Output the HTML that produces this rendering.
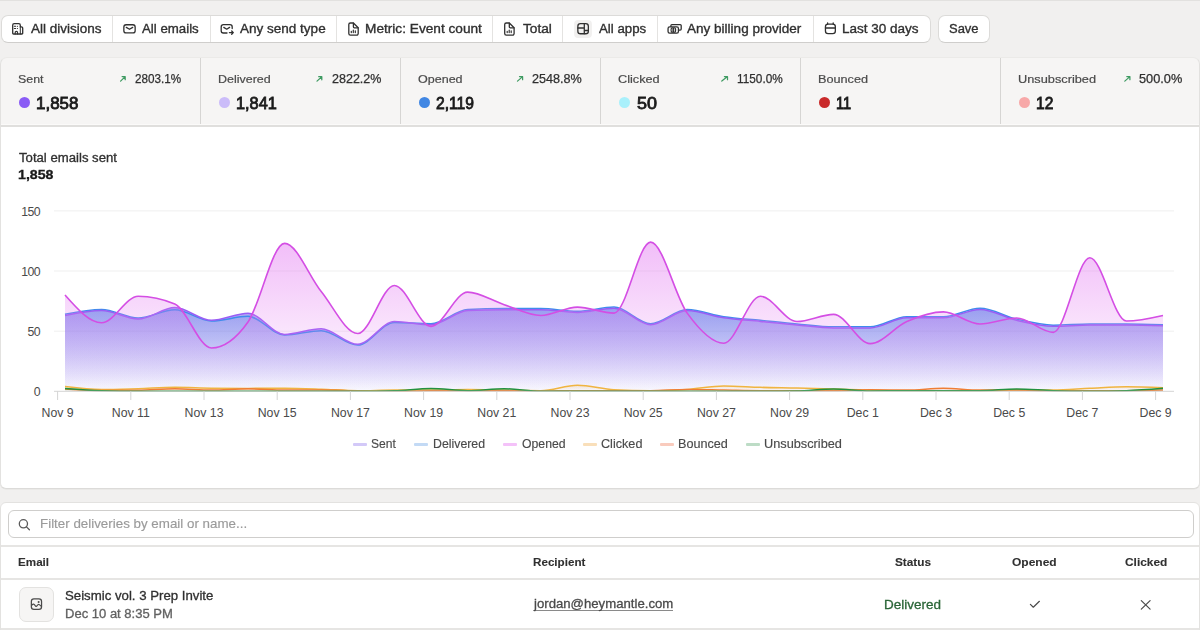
<!DOCTYPE html>
<html><head><meta charset="utf-8">
<style>
*{box-sizing:border-box;margin:0;padding:0}
html,body{width:1200px;height:630px;overflow:hidden;background:#f1f0ef;font-family:"Liberation Sans",sans-serif;color:#303030}
body{position:relative}
.topline{position:absolute;left:0;top:0;width:1200px;height:1px;background:#e2e1df}
.group{position:absolute;left:1px;top:15px;width:930px;height:28px;background:#fff;border:1px solid #dcdbd9;border-bottom-color:#cfcecc;border-radius:7px}
.dv{position:absolute;top:16px;width:1px;height:26px;background:#e4e3e1}
.t{position:absolute;white-space:nowrap;font-size:13px;line-height:16px;color:#303030}
.save{position:absolute;left:938px;top:15px;width:52px;height:28px;background:#fff;border:1px solid #dcdbd9;border-bottom-color:#cfcecc;border-radius:7px}
.stats{position:absolute;left:0;top:57px;width:1200px;height:70px;background:#f6f5f4;border:1px solid #e2e1df;border-top-color:#ebeae8;border-bottom:none;border-radius:7px 7px 0 0}
.sbot{position:absolute;left:1px;top:125px;width:1198px;height:2px;background:#e0dfdd;box-shadow:0 -1px 0 #fbfaf9}
.sdv{position:absolute;top:58px;width:1px;height:67px;background:#d6d5d3}
.lab{position:absolute;white-space:nowrap;font-size:12px;line-height:14px;color:#4a4a4a}
.pct{position:absolute;white-space:nowrap;font-size:12px;line-height:14px;color:#303030}
.num{position:absolute;white-space:nowrap;font-size:17px;line-height:20px;font-weight:bold;color:#1a1a1a}
.dot{position:absolute;width:11px;height:11px;border-radius:50%}
.card{position:absolute;left:0;top:127px;width:1200px;height:362px;background:#fff;border:1px solid #e3e2e0;border-top:none;border-bottom-color:#dcdbd9;border-radius:0 0 6px 6px;box-shadow:0 0.5px 0 #e3e2e0}
.chart{position:absolute;left:0;top:0}
.tcard{position:absolute;left:0;top:502px;width:1200px;height:140px;background:#fff;border:1px solid #e3e2e0;border-radius:6px 6px 0 0}
.search{position:absolute;left:8px;top:510px;width:1186px;height:28px;border:1px solid #cfcecc;border-radius:6px;background:#fff}
.ph{position:absolute;white-space:nowrap;font-size:13px;line-height:16px;color:#8d8d8d}
.hline{position:absolute;left:1px;width:1198px;height:2px;background:#e6e5e3}
.th{position:absolute;white-space:nowrap;font-size:12px;line-height:14px;font-weight:bold;color:#303030}
.td{position:absolute;white-space:nowrap;font-size:13px;line-height:16px;color:#303030}
.leg{position:absolute;white-space:nowrap;font-size:12px;line-height:14px;color:#4a4a4a}
.li{position:absolute;width:14px;height:3px;border-radius:1px}
svg.ic{position:absolute;overflow:visible}
.tx{position:absolute;white-space:nowrap;font-family:"Liberation Sans",sans-serif;transform-origin:0 0}
</style></head><body>
<div class="topline"></div>
<div class="group"></div>
<div class="dv" style="left:112px"></div>
<div class="dv" style="left:210px"></div>
<div class="dv" style="left:336px"></div>
<div class="dv" style="left:492px"></div>
<div class="dv" style="left:562px"></div>
<div class="dv" style="left:657px"></div>
<div class="dv" style="left:813px"></div>
<div class="save"></div>

<div class="stats"></div>
<div class="sdv" style="left:200px"></div>
<div class="sdv" style="left:400px"></div>
<div class="sdv" style="left:600px"></div>
<div class="sdv" style="left:800px"></div>
<div class="sdv" style="left:1000px"></div>
<div class="sbot"></div>



<div class="dot" style="left:18.7px;top:97.2px;background:#8a5cf5"></div>
<div class="dot" style="left:218.8px;top:97.2px;background:#cbbcf9"></div>
<div class="dot" style="left:418.8px;top:97.2px;background:#4187e3"></div>
<div class="dot" style="left:618.8px;top:97.2px;background:#a9f0fb"></div>
<div class="dot" style="left:818.8px;top:97.2px;background:#c92a2a"></div>
<div class="dot" style="left:1018.8px;top:97.2px;background:#f7a8a8"></div>


<div class="card"></div>
<svg class="chart" width="1200" height="630" viewBox="0 0 1200 630">
<defs><linearGradient id="gs" x1="0" y1="307.6" x2="0" y2="391.3" gradientUnits="userSpaceOnUse"><stop offset="0" stop-color="#7a68ea" stop-opacity="0.62"/><stop offset="1" stop-color="#7a68ea" stop-opacity="0.04"/></linearGradient><linearGradient id="gd" x1="0" y1="307.1" x2="0" y2="391.3" gradientUnits="userSpaceOnUse"><stop offset="0" stop-color="#4a8fe6" stop-opacity="0.2"/><stop offset="1" stop-color="#4a8fe6" stop-opacity="0.0"/></linearGradient><linearGradient id="go" x1="0" y1="242.2" x2="0" y2="391.3" gradientUnits="userSpaceOnUse"><stop offset="0" stop-color="#e47cf2" stop-opacity="0.5"/><stop offset="1" stop-color="#e47cf2" stop-opacity="0.0"/></linearGradient><linearGradient id="gc" x1="0" y1="385.3" x2="0" y2="391.3" gradientUnits="userSpaceOnUse"><stop offset="0" stop-color="#f0b441" stop-opacity="0.2"/><stop offset="1" stop-color="#f0b441" stop-opacity="0.0"/></linearGradient><linearGradient id="gb" x1="0" y1="388.3" x2="0" y2="391.3" gradientUnits="userSpaceOnUse"><stop offset="0" stop-color="#ef7d35" stop-opacity="0.2"/><stop offset="1" stop-color="#ef7d35" stop-opacity="0.0"/></linearGradient><linearGradient id="gu" x1="0" y1="388.3" x2="0" y2="391.3" gradientUnits="userSpaceOnUse"><stop offset="0" stop-color="#23913f" stop-opacity="0.2"/><stop offset="1" stop-color="#23913f" stop-opacity="0.0"/></linearGradient></defs>
<line x1="54" y1="210.9" x2="1174" y2="210.9" stroke="#efefef" stroke-width="1"/><line x1="54" y1="271.0" x2="1174" y2="271.0" stroke="#efefef" stroke-width="1"/><line x1="54" y1="331.2" x2="1174" y2="331.2" stroke="#efefef" stroke-width="1"/>
<path d="M65.00,315.41C77.20,313.00,89.40,310.60,101.60,310.60C113.80,310.60,126.00,319.02,138.20,319.02C150.40,319.02,162.60,307.59,174.80,307.59C187.00,307.59,199.20,320.34,211.40,320.34C223.60,320.34,235.80,313.24,248.00,313.24C260.20,313.24,272.40,334.41,284.60,334.41C296.80,334.41,309.00,328.76,321.20,328.76C333.40,328.76,345.60,344.27,357.80,344.27C370.00,344.27,382.20,321.54,394.40,321.54C406.60,321.54,418.80,324.79,431.00,324.79C443.20,324.79,455.40,311.24,467.60,310.60C479.80,309.96,492.00,309.64,504.20,309.64C516.40,309.64,528.60,309.64,540.80,309.64C553.00,309.64,565.20,312.40,577.40,312.40C589.60,312.40,601.80,308.19,614.00,308.19C626.20,308.19,638.40,324.79,650.60,324.79C662.80,324.79,675.00,310.60,687.20,310.60C699.40,310.60,711.60,316.01,723.80,317.82C736.00,319.62,748.20,320.22,760.40,321.42C772.60,322.63,784.80,323.95,797.00,325.03C809.20,326.11,821.40,327.92,833.60,327.92C845.80,327.92,858.00,327.92,870.20,327.92C882.40,327.92,894.60,317.82,906.80,317.82C919.00,317.82,931.20,317.82,943.40,317.82C955.60,317.82,967.80,309.40,980.00,309.40C992.20,309.40,1004.40,317.41,1016.60,320.22C1028.80,323.03,1041.00,326.23,1053.20,326.23C1065.40,326.23,1077.60,325.03,1089.80,325.03C1102.00,325.03,1114.20,325.03,1126.40,325.03C1138.60,325.03,1150.80,325.45,1163.00,325.87L1163.00,391.30L65.00,391.30Z" fill="url(#gs)"/><path d="M65.00,314.33C77.20,311.92,89.40,309.52,101.60,309.52C113.80,309.52,126.00,317.94,138.20,317.94C150.40,317.94,162.60,309.76,174.80,309.76C187.00,309.76,199.20,320.94,211.40,320.94C223.60,320.94,235.80,316.37,248.00,316.37C260.20,316.37,272.40,335.01,284.60,335.01C296.80,335.01,309.00,330.68,321.20,330.68C333.40,330.68,345.60,345.12,357.80,345.12C370.00,345.12,382.20,322.39,394.40,322.39C406.60,322.39,418.80,323.71,431.00,323.71C443.20,323.71,455.40,310.16,467.60,309.52C479.80,308.87,492.00,308.55,504.20,308.55C516.40,308.55,528.60,308.55,540.80,308.55C553.00,308.55,565.20,311.32,577.40,311.32C589.60,311.32,601.80,307.11,614.00,307.11C626.20,307.11,638.40,323.71,650.60,323.71C662.80,323.71,675.00,309.52,687.20,309.52C699.40,309.52,711.60,314.93,723.80,316.73C736.00,318.54,748.20,319.14,760.40,320.34C772.60,321.54,784.80,322.87,797.00,323.95C809.20,325.03,821.40,326.84,833.60,326.84C845.80,326.84,858.00,326.84,870.20,326.84C882.40,326.84,894.60,316.73,906.80,316.73C919.00,316.73,931.20,316.73,943.40,316.73C955.60,316.73,967.80,308.31,980.00,308.31C992.20,308.31,1004.40,316.33,1016.60,319.14C1028.80,321.94,1041.00,325.15,1053.20,325.15C1065.40,325.15,1077.60,323.95,1089.80,323.95C1102.00,323.95,1114.20,323.95,1126.40,323.95C1138.60,323.95,1150.80,324.37,1163.00,324.79L1163.00,391.30L65.00,391.30Z" fill="url(#gd)"/><path d="M65.00,314.33C77.20,311.92,89.40,309.52,101.60,309.52C113.80,309.52,126.00,317.94,138.20,317.94C150.40,317.94,162.60,309.76,174.80,309.76C187.00,309.76,199.20,320.94,211.40,320.94C223.60,320.94,235.80,316.37,248.00,316.37C260.20,316.37,272.40,335.01,284.60,335.01C296.80,335.01,309.00,330.68,321.20,330.68C333.40,330.68,345.60,345.12,357.80,345.12C370.00,345.12,382.20,322.39,394.40,322.39C406.60,322.39,418.80,323.71,431.00,323.71C443.20,323.71,455.40,310.16,467.60,309.52C479.80,308.87,492.00,308.55,504.20,308.55C516.40,308.55,528.60,308.55,540.80,308.55C553.00,308.55,565.20,311.32,577.40,311.32C589.60,311.32,601.80,307.11,614.00,307.11C626.20,307.11,638.40,323.71,650.60,323.71C662.80,323.71,675.00,309.52,687.20,309.52C699.40,309.52,711.60,314.93,723.80,316.73C736.00,318.54,748.20,319.14,760.40,320.34C772.60,321.54,784.80,322.87,797.00,323.95C809.20,325.03,821.40,326.84,833.60,326.84C845.80,326.84,858.00,326.84,870.20,326.84C882.40,326.84,894.60,316.73,906.80,316.73C919.00,316.73,931.20,316.73,943.40,316.73C955.60,316.73,967.80,308.31,980.00,308.31C992.20,308.31,1004.40,316.33,1016.60,319.14C1028.80,321.94,1041.00,325.15,1053.20,325.15C1065.40,325.15,1077.60,323.95,1089.80,323.95C1102.00,323.95,1114.20,323.95,1126.40,323.95C1138.60,323.95,1150.80,324.37,1163.00,324.79" fill="none" stroke="#3f8cec" stroke-width="1.5"/><path d="M65.00,315.41C77.20,313.00,89.40,310.60,101.60,310.60C113.80,310.60,126.00,319.02,138.20,319.02C150.40,319.02,162.60,307.59,174.80,307.59C187.00,307.59,199.20,320.34,211.40,320.34C223.60,320.34,235.80,313.24,248.00,313.24C260.20,313.24,272.40,334.41,284.60,334.41C296.80,334.41,309.00,328.76,321.20,328.76C333.40,328.76,345.60,344.27,357.80,344.27C370.00,344.27,382.20,321.54,394.40,321.54C406.60,321.54,418.80,324.79,431.00,324.79C443.20,324.79,455.40,311.24,467.60,310.60C479.80,309.96,492.00,309.64,504.20,309.64C516.40,309.64,528.60,309.64,540.80,309.64C553.00,309.64,565.20,312.40,577.40,312.40C589.60,312.40,601.80,308.19,614.00,308.19C626.20,308.19,638.40,324.79,650.60,324.79C662.80,324.79,675.00,310.60,687.20,310.60C699.40,310.60,711.60,316.01,723.80,317.82C736.00,319.62,748.20,320.22,760.40,321.42C772.60,322.63,784.80,323.95,797.00,325.03C809.20,326.11,821.40,327.92,833.60,327.92C845.80,327.92,858.00,327.92,870.20,327.92C882.40,327.92,894.60,317.82,906.80,317.82C919.00,317.82,931.20,317.82,943.40,317.82C955.60,317.82,967.80,309.40,980.00,309.40C992.20,309.40,1004.40,317.41,1016.60,320.22C1028.80,323.03,1041.00,326.23,1053.20,326.23C1065.40,326.23,1077.60,325.03,1089.80,325.03C1102.00,325.03,1114.20,325.03,1126.40,325.03C1138.60,325.03,1150.80,325.45,1163.00,325.87" fill="none" stroke="#9a5df5" stroke-width="1.5"/><path d="M65.00,295.08C77.20,308.92,89.40,322.75,101.60,322.75C113.80,322.75,126.00,296.29,138.20,296.29C150.40,296.29,162.60,298.89,174.80,304.10C187.00,309.32,199.20,348.00,211.40,348.00C223.60,348.00,235.80,339.34,248.00,322.02C260.20,304.71,272.40,243.37,284.60,243.37C296.80,243.37,309.00,276.44,321.20,291.48C333.40,306.51,345.60,333.57,357.80,333.57C370.00,333.57,382.20,285.46,394.40,285.46C406.60,285.46,418.80,326.35,431.00,326.35C443.20,326.35,455.40,292.08,467.60,292.08C479.80,292.08,492.00,300.80,504.20,304.71C516.40,308.61,528.60,315.53,540.80,315.53C553.00,315.53,565.20,307.11,577.40,307.11C589.60,307.11,601.80,313.12,614.00,313.12C626.20,313.12,638.40,242.17,650.60,242.17C662.80,242.17,675.00,296.29,687.20,313.12C699.40,329.96,711.60,343.19,723.80,343.19C736.00,343.19,748.20,296.29,760.40,296.29C772.60,296.29,784.80,321.54,797.00,321.54C809.20,321.54,821.40,314.33,833.60,314.33C845.80,314.33,858.00,343.67,870.20,343.67C882.40,343.67,894.60,326.84,906.80,321.54C919.00,316.25,931.20,311.92,943.40,311.92C955.60,311.92,967.80,323.95,980.00,323.95C992.20,323.95,1004.40,317.94,1016.60,317.94C1028.80,317.94,1041.00,332.37,1053.20,332.37C1065.40,332.37,1077.60,257.80,1089.80,257.80C1102.00,257.80,1114.20,321.06,1126.40,321.06C1138.60,321.06,1150.80,318.30,1163.00,315.53L1163.00,391.30L65.00,391.30Z" fill="url(#go)"/><path d="M65.00,295.08C77.20,308.92,89.40,322.75,101.60,322.75C113.80,322.75,126.00,296.29,138.20,296.29C150.40,296.29,162.60,298.89,174.80,304.10C187.00,309.32,199.20,348.00,211.40,348.00C223.60,348.00,235.80,339.34,248.00,322.02C260.20,304.71,272.40,243.37,284.60,243.37C296.80,243.37,309.00,276.44,321.20,291.48C333.40,306.51,345.60,333.57,357.80,333.57C370.00,333.57,382.20,285.46,394.40,285.46C406.60,285.46,418.80,326.35,431.00,326.35C443.20,326.35,455.40,292.08,467.60,292.08C479.80,292.08,492.00,300.80,504.20,304.71C516.40,308.61,528.60,315.53,540.80,315.53C553.00,315.53,565.20,307.11,577.40,307.11C589.60,307.11,601.80,313.12,614.00,313.12C626.20,313.12,638.40,242.17,650.60,242.17C662.80,242.17,675.00,296.29,687.20,313.12C699.40,329.96,711.60,343.19,723.80,343.19C736.00,343.19,748.20,296.29,760.40,296.29C772.60,296.29,784.80,321.54,797.00,321.54C809.20,321.54,821.40,314.33,833.60,314.33C845.80,314.33,858.00,343.67,870.20,343.67C882.40,343.67,894.60,326.84,906.80,321.54C919.00,316.25,931.20,311.92,943.40,311.92C955.60,311.92,967.80,323.95,980.00,323.95C992.20,323.95,1004.40,317.94,1016.60,317.94C1028.80,317.94,1041.00,332.37,1053.20,332.37C1065.40,332.37,1077.60,257.80,1089.80,257.80C1102.00,257.80,1114.20,321.06,1126.40,321.06C1138.60,321.06,1150.80,318.30,1163.00,315.53" fill="none" stroke="#d44ee4" stroke-width="1.6"/><path d="M65.00,386.49C77.20,387.99,89.40,389.50,101.60,389.50C113.80,389.50,126.00,389.01,138.20,388.65C150.40,388.29,162.60,387.33,174.80,387.33C187.00,387.33,199.20,388.01,211.40,388.17C223.60,388.33,235.80,388.41,248.00,388.41C260.20,388.41,272.40,388.17,284.60,388.17C296.80,388.17,309.00,388.71,321.20,389.14C333.40,389.56,345.60,390.70,357.80,390.70C370.00,390.70,382.20,390.10,394.40,390.10C406.60,390.10,418.80,390.10,431.00,390.10C443.20,390.10,455.40,389.50,467.60,389.50C479.80,389.50,492.00,389.90,504.20,390.10C516.40,390.30,528.60,390.70,540.80,390.70C553.00,390.70,565.20,385.29,577.40,385.29C589.60,385.29,601.80,389.10,614.00,389.74C626.20,390.38,638.40,390.70,650.60,390.70C662.80,390.70,675.00,390.18,687.20,389.38C699.40,388.57,711.60,385.89,723.80,385.89C736.00,385.89,748.20,386.97,760.40,387.33C772.60,387.69,784.80,387.77,797.00,388.05C809.20,388.33,821.40,388.67,833.60,389.01C845.80,389.36,858.00,389.82,870.20,390.10C882.40,390.38,894.60,390.70,906.80,390.70C919.00,390.70,931.20,390.70,943.40,390.70C955.60,390.70,967.80,390.70,980.00,390.70C992.20,390.70,1004.40,390.10,1016.60,390.10C1028.80,390.10,1041.00,390.10,1053.20,390.10C1065.40,390.10,1077.60,388.85,1089.80,388.29C1102.00,387.73,1114.20,386.73,1126.40,386.73C1138.60,386.73,1150.80,387.21,1163.00,387.69L1163.00,391.30L65.00,391.30Z" fill="url(#gc)"/><path d="M65.00,386.49C77.20,387.99,89.40,389.50,101.60,389.50C113.80,389.50,126.00,389.01,138.20,388.65C150.40,388.29,162.60,387.33,174.80,387.33C187.00,387.33,199.20,388.01,211.40,388.17C223.60,388.33,235.80,388.41,248.00,388.41C260.20,388.41,272.40,388.17,284.60,388.17C296.80,388.17,309.00,388.71,321.20,389.14C333.40,389.56,345.60,390.70,357.80,390.70C370.00,390.70,382.20,390.10,394.40,390.10C406.60,390.10,418.80,390.10,431.00,390.10C443.20,390.10,455.40,389.50,467.60,389.50C479.80,389.50,492.00,389.90,504.20,390.10C516.40,390.30,528.60,390.70,540.80,390.70C553.00,390.70,565.20,385.29,577.40,385.29C589.60,385.29,601.80,389.10,614.00,389.74C626.20,390.38,638.40,390.70,650.60,390.70C662.80,390.70,675.00,390.18,687.20,389.38C699.40,388.57,711.60,385.89,723.80,385.89C736.00,385.89,748.20,386.97,760.40,387.33C772.60,387.69,784.80,387.77,797.00,388.05C809.20,388.33,821.40,388.67,833.60,389.01C845.80,389.36,858.00,389.82,870.20,390.10C882.40,390.38,894.60,390.70,906.80,390.70C919.00,390.70,931.20,390.70,943.40,390.70C955.60,390.70,967.80,390.70,980.00,390.70C992.20,390.70,1004.40,390.10,1016.60,390.10C1028.80,390.10,1041.00,390.10,1053.20,390.10C1065.40,390.10,1077.60,388.85,1089.80,388.29C1102.00,387.73,1114.20,386.73,1126.40,386.73C1138.60,386.73,1150.80,387.21,1163.00,387.69" fill="none" stroke="#f0b441" stroke-width="1.5"/><path d="M65.00,388.89C77.20,389.74,89.40,390.58,101.60,390.58C113.80,390.58,126.00,390.50,138.20,390.34C150.40,390.18,162.60,388.77,174.80,388.77C187.00,388.77,199.20,390.10,211.40,390.10C223.60,390.10,235.80,388.77,248.00,388.77C260.20,388.77,272.40,390.10,284.60,390.10C296.80,390.10,309.00,390.10,321.20,390.10C333.40,390.10,345.60,390.74,357.80,390.94C370.00,391.14,382.20,391.30,394.40,391.30C406.60,391.30,418.80,390.70,431.00,390.70C443.20,390.70,455.40,390.70,467.60,390.70C479.80,390.70,492.00,390.70,504.20,390.70C516.40,390.70,528.60,390.94,540.80,390.94C553.00,390.94,565.20,390.70,577.40,390.70C589.60,390.70,601.80,390.70,614.00,390.70C626.20,390.70,638.40,390.70,650.60,390.70C662.80,390.70,675.00,389.50,687.20,389.50C699.40,389.50,711.60,389.90,723.80,390.10C736.00,390.30,748.20,390.70,760.40,390.70C772.60,390.70,784.80,390.70,797.00,390.70C809.20,390.70,821.40,390.70,833.60,390.70C845.80,390.70,858.00,389.86,870.20,389.86C882.40,389.86,894.60,390.10,906.80,390.10C919.00,390.10,931.20,388.29,943.40,388.29C955.60,388.29,967.80,390.10,980.00,390.10C992.20,390.10,1004.40,390.10,1016.60,390.10C1028.80,390.10,1041.00,390.70,1053.20,390.70C1065.40,390.70,1077.60,390.70,1089.80,390.70C1102.00,390.70,1114.20,390.70,1126.40,390.70C1138.60,390.70,1150.80,390.40,1163.00,390.10L1163.00,391.30L65.00,391.30Z" fill="url(#gb)"/><path d="M65.00,388.89C77.20,389.74,89.40,390.58,101.60,390.58C113.80,390.58,126.00,390.50,138.20,390.34C150.40,390.18,162.60,388.77,174.80,388.77C187.00,388.77,199.20,390.10,211.40,390.10C223.60,390.10,235.80,388.77,248.00,388.77C260.20,388.77,272.40,390.10,284.60,390.10C296.80,390.10,309.00,390.10,321.20,390.10C333.40,390.10,345.60,390.74,357.80,390.94C370.00,391.14,382.20,391.30,394.40,391.30C406.60,391.30,418.80,390.70,431.00,390.70C443.20,390.70,455.40,390.70,467.60,390.70C479.80,390.70,492.00,390.70,504.20,390.70C516.40,390.70,528.60,390.94,540.80,390.94C553.00,390.94,565.20,390.70,577.40,390.70C589.60,390.70,601.80,390.70,614.00,390.70C626.20,390.70,638.40,390.70,650.60,390.70C662.80,390.70,675.00,389.50,687.20,389.50C699.40,389.50,711.60,389.90,723.80,390.10C736.00,390.30,748.20,390.70,760.40,390.70C772.60,390.70,784.80,390.70,797.00,390.70C809.20,390.70,821.40,390.70,833.60,390.70C845.80,390.70,858.00,389.86,870.20,389.86C882.40,389.86,894.60,390.10,906.80,390.10C919.00,390.10,931.20,388.29,943.40,388.29C955.60,388.29,967.80,390.10,980.00,390.10C992.20,390.10,1004.40,390.10,1016.60,390.10C1028.80,390.10,1041.00,390.70,1053.20,390.70C1065.40,390.70,1077.60,390.70,1089.80,390.70C1102.00,390.70,1114.20,390.70,1126.40,390.70C1138.60,390.70,1150.80,390.40,1163.00,390.10" fill="none" stroke="#ef7d35" stroke-width="1.5"/><path d="M65.00,388.41C77.20,389.36,89.40,390.30,101.60,390.70C113.80,391.10,126.00,391.30,138.20,391.30C150.40,391.30,162.60,391.30,174.80,391.30C187.00,391.30,199.20,391.30,211.40,391.30C223.60,391.30,235.80,391.30,248.00,391.30C260.20,391.30,272.40,391.30,284.60,391.30C296.80,391.30,309.00,391.30,321.20,391.30C333.40,391.30,345.60,391.30,357.80,391.30C370.00,391.30,382.20,391.10,394.40,390.70C406.60,390.30,418.80,388.53,431.00,388.53C443.20,388.53,455.40,390.70,467.60,390.70C479.80,390.70,492.00,388.77,504.20,388.77C516.40,388.77,528.60,391.30,540.80,391.30C553.00,391.30,565.20,391.30,577.40,391.30C589.60,391.30,601.80,391.30,614.00,391.30C626.20,391.30,638.40,391.30,650.60,391.30C662.80,391.30,675.00,391.30,687.20,391.30C699.40,391.30,711.60,391.30,723.80,391.30C736.00,391.30,748.20,391.30,760.40,391.30C772.60,391.30,784.80,391.18,797.00,390.94C809.20,390.70,821.40,388.89,833.60,388.89C845.80,388.89,858.00,390.94,870.20,390.94C882.40,390.94,894.60,390.70,906.80,390.70C919.00,390.70,931.20,390.70,943.40,390.70C955.60,390.70,967.80,390.70,980.00,390.70C992.20,390.70,1004.40,388.89,1016.60,388.89C1028.80,388.89,1041.00,390.30,1053.20,390.70C1065.40,391.10,1077.60,391.30,1089.80,391.30C1102.00,391.30,1114.20,391.10,1126.40,390.70C1138.60,390.30,1150.80,389.30,1163.00,388.29L1163.00,391.30L65.00,391.30Z" fill="url(#gu)"/><path d="M65.00,388.41C77.20,389.36,89.40,390.30,101.60,390.70C113.80,391.10,126.00,391.30,138.20,391.30C150.40,391.30,162.60,391.30,174.80,391.30C187.00,391.30,199.20,391.30,211.40,391.30C223.60,391.30,235.80,391.30,248.00,391.30C260.20,391.30,272.40,391.30,284.60,391.30C296.80,391.30,309.00,391.30,321.20,391.30C333.40,391.30,345.60,391.30,357.80,391.30C370.00,391.30,382.20,391.10,394.40,390.70C406.60,390.30,418.80,388.53,431.00,388.53C443.20,388.53,455.40,390.70,467.60,390.70C479.80,390.70,492.00,388.77,504.20,388.77C516.40,388.77,528.60,391.30,540.80,391.30C553.00,391.30,565.20,391.30,577.40,391.30C589.60,391.30,601.80,391.30,614.00,391.30C626.20,391.30,638.40,391.30,650.60,391.30C662.80,391.30,675.00,391.30,687.20,391.30C699.40,391.30,711.60,391.30,723.80,391.30C736.00,391.30,748.20,391.30,760.40,391.30C772.60,391.30,784.80,391.18,797.00,390.94C809.20,390.70,821.40,388.89,833.60,388.89C845.80,388.89,858.00,390.94,870.20,390.94C882.40,390.94,894.60,390.70,906.80,390.70C919.00,390.70,931.20,390.70,943.40,390.70C955.60,390.70,967.80,390.70,980.00,390.70C992.20,390.70,1004.40,388.89,1016.60,388.89C1028.80,388.89,1041.00,390.30,1053.20,390.70C1065.40,391.10,1077.60,391.30,1089.80,391.30C1102.00,391.30,1114.20,391.10,1126.40,390.70C1138.60,390.30,1150.80,389.30,1163.00,388.29" fill="none" stroke="#23913f" stroke-width="1.5"/>
<line x1="54" y1="391.3" x2="1174" y2="391.3" stroke="#d4d4d4" stroke-width="1"/><line x1="57.6" y1="391.3" x2="57.6" y2="400" stroke="#d4d4d4" stroke-width="1"/><line x1="130.8" y1="391.3" x2="130.8" y2="400" stroke="#d4d4d4" stroke-width="1"/><line x1="204.0" y1="391.3" x2="204.0" y2="400" stroke="#d4d4d4" stroke-width="1"/><line x1="277.2" y1="391.3" x2="277.2" y2="400" stroke="#d4d4d4" stroke-width="1"/><line x1="350.4" y1="391.3" x2="350.4" y2="400" stroke="#d4d4d4" stroke-width="1"/><line x1="423.6" y1="391.3" x2="423.6" y2="400" stroke="#d4d4d4" stroke-width="1"/><line x1="496.8" y1="391.3" x2="496.8" y2="400" stroke="#d4d4d4" stroke-width="1"/><line x1="570.0" y1="391.3" x2="570.0" y2="400" stroke="#d4d4d4" stroke-width="1"/><line x1="643.2" y1="391.3" x2="643.2" y2="400" stroke="#d4d4d4" stroke-width="1"/><line x1="716.4" y1="391.3" x2="716.4" y2="400" stroke="#d4d4d4" stroke-width="1"/><line x1="789.6" y1="391.3" x2="789.6" y2="400" stroke="#d4d4d4" stroke-width="1"/><line x1="862.8" y1="391.3" x2="862.8" y2="400" stroke="#d4d4d4" stroke-width="1"/><line x1="936.0" y1="391.3" x2="936.0" y2="400" stroke="#d4d4d4" stroke-width="1"/><line x1="1009.2" y1="391.3" x2="1009.2" y2="400" stroke="#d4d4d4" stroke-width="1"/><line x1="1082.4" y1="391.3" x2="1082.4" y2="400" stroke="#d4d4d4" stroke-width="1"/><line x1="1155.6" y1="391.3" x2="1155.6" y2="400" stroke="#d4d4d4" stroke-width="1"/>
<g font-family="Liberation Sans, sans-serif" font-size="12.3" fill="#4a4a4a"><text x="57.6" y="416.8" text-anchor="middle">Nov 9</text><text x="130.8" y="416.8" text-anchor="middle">Nov 11</text><text x="204.0" y="416.8" text-anchor="middle">Nov 13</text><text x="277.2" y="416.8" text-anchor="middle">Nov 15</text><text x="350.4" y="416.8" text-anchor="middle">Nov 17</text><text x="423.6" y="416.8" text-anchor="middle">Nov 19</text><text x="496.8" y="416.8" text-anchor="middle">Nov 21</text><text x="570.0" y="416.8" text-anchor="middle">Nov 23</text><text x="643.2" y="416.8" text-anchor="middle">Nov 25</text><text x="716.4" y="416.8" text-anchor="middle">Nov 27</text><text x="789.6" y="416.8" text-anchor="middle">Nov 29</text><text x="862.8" y="416.8" text-anchor="middle">Dec 1</text><text x="936.0" y="416.8" text-anchor="middle">Dec 3</text><text x="1009.2" y="416.8" text-anchor="middle">Dec 5</text><text x="1082.4" y="416.8" text-anchor="middle">Dec 7</text><text x="1155.6" y="416.8" text-anchor="middle">Dec 9</text><text x="40" y="215.7" text-anchor="end" letter-spacing="-0.6">150</text><text x="40" y="275.8" text-anchor="end" letter-spacing="-0.6">100</text><text x="40" y="336.0" text-anchor="end" letter-spacing="-0.6">50</text><text x="40" y="396.1" text-anchor="end" letter-spacing="-0.6">0</text></g>
</svg>

<div class="li" style="left:353px;top:443px;background:#d3c9f8"></div>
<div class="li" style="left:414.3px;top:443px;background:#c3daf5"></div>
<div class="li" style="left:503px;top:443px;background:#f4c2f9"></div>
<div class="li" style="left:583.2px;top:443px;background:#f9dfba"></div>
<div class="li" style="left:660.3px;top:443px;background:#f9cbbd"></div>
<div class="li" style="left:745.8px;top:443px;background:#bddcc6"></div>

<div class="tcard"></div>
<div class="search"></div>
<div class="hline" style="top:545px"></div>
<div class="hline" style="top:578px"></div>
<div class="hline" style="top:628px"></div>
<div style="position:absolute;left:19px;top:586.5px;width:35px;height:35.5px;border:1px solid #e3e2e0;border-radius:7px;background:#f6f5f4"></div>
<div style="position:absolute;left:533.5px;top:610px;width:139.5px;height:1px;background:#8a8a8a"></div>
<svg style="position:absolute;left:0;top:0" width="1200" height="630" viewBox="0 0 1200 630">
<g fill="none" stroke="#303030" stroke-width="1.3" stroke-linecap="round" stroke-linejoin="round">
 <!-- building -->
 <path d="M12.7,33.2V25.2a1.5,1.5 0 0 1 1.5,-1.5h4.6a1.5,1.5 0 0 1 1.5,1.5V26.9h1.1a1.3,1.3 0 0 1 1.3,1.3V33.2a0.8,0.8 0 0 1 -0.8,0.8H13.5a0.8,0.8 0 0 1 -0.8,-0.8Z"/>
 <path d="M20.3,26.9V34" stroke-width="1"/>
 <path d="M14.4,26.3h1.2M17.4,26.3h0.1M14.4,28.5h1.2M17.4,28.5h0.1" stroke-width="1.1"/>
 <path d="M15.2,34V32.6a1.2,1.2 0 0 1 2.4,0V34" stroke-width="1.1"/>
 <!-- mail -->
 <rect x="123.85" y="24.75" width="11.3" height="8.2" rx="2.3"/>
 <path d="M126.3,27.4L129.5,29.3L132.7,27.4"/>
 <!-- send -->
 <path d="M232.2,28.6V26.9a2.2,2.2 0 0 0 -2.2,-2.2H223.4a2.2,2.2 0 0 0 -2.2,2.2V30.8a2.2,2.2 0 0 0 2.2,2.2H227"/>
 <path d="M223.8,27.4L226.7,29.2L229.6,27.4"/>
 <path d="M229.4,32.6H233.3M231.7,31L233.3,32.6L231.7,34.2"/>
 <!-- metric doc -->
 <path d="M348.8,33.6V24.6a1.6,1.6 0 0 1 1.6,-1.6H353.4L358.2,27.8V33.6a1.6,1.6 0 0 1 -1.6,1.6H350.4a1.6,1.6 0 0 1 -1.6,-1.6Z"/>
 <path d="M353.4,23.2V26.8a1,1 0 0 0 1,1H358"/>
 <path d="M351.3,31.3V32.6M353.3,30.2V32.6M355.3,30.8V32.6" stroke-width="1.2"/>
 <!-- total doc -->
 <path d="M504.7,33.6V24.6a1.6,1.6 0 0 1 1.6,-1.6H509.3L514.1,27.8V33.6a1.6,1.6 0 0 1 -1.6,1.6H506.3a1.6,1.6 0 0 1 -1.6,-1.6Z"/>
 <path d="M509.3,23.2V26.8a1,1 0 0 0 1,1H513.9"/>
 <path d="M507.2,31.3V32.6M509.2,30.2V32.6M511.2,30.8V32.6" stroke-width="1.2"/>
 <!-- apps -->
 <rect x="574.1" y="19.9" width="17.8" height="18" rx="4" fill="#f1f0ef" stroke="none"/>
 <rect x="577.85" y="23.65" width="10.5" height="10.1" rx="2.6"/>
 <path d="M584.3,23.7V33.7M577.9,28H584.3M584.3,30.5H588.3"/>
 <!-- billing -->
 <path d="M670.9,26.4V25.6a1,1 0 0 1 1,-1H680.2a1,1 0 0 1 1,1V29.1a1,1 0 0 1 -1,1H679.2"/>
 <rect x="668.05" y="26.9" width="10.4" height="6.2" rx="1.6"/>
 <ellipse cx="672.4" cy="30" rx="1.35" ry="2.3" stroke-width="1.1"/>
 <ellipse cx="674.3" cy="30" rx="1.35" ry="2.3" stroke-width="1.1"/>
 <!-- calendar -->
 <rect x="825.45" y="24.1" width="9.9" height="9.6" rx="2.6"/>
 <path d="M825.5,28H835.3"/>
 <path d="M827.6,22.9V24.1M833.2,22.9V24.1"/>
 <!-- search -->
 <circle cx="23.4" cy="523.8" r="4.1" stroke-width="1.3" stroke="#5a5a5a"/>
 <path d="M26.5,526.9L29.4,529.8" stroke-width="1.3" stroke="#5a5a5a"/>
 <!-- image icon -->
 <rect x="31.35" y="598.95" width="10.2" height="10.4" rx="2.6" stroke="#4a4a4a" stroke-width="1.25"/>
 <path d="M31.7,605.4C32.8,603.9 33.6,603.7 34.4,604.6L35.8,606.3C36.6,607 37.2,605 38.3,604.5C39.2,604.2 40.2,605.3 41.2,606.2" stroke="#4a4a4a" stroke-width="1.2"/>
 <circle cx="38.6" cy="601.9" r="1" fill="#4a4a4a" stroke="none"/>
 <!-- check / x -->
 <path d="M1030.4,604.4L1033.3,607.2L1039.4,601.3" stroke="#4a4a4a" stroke-width="1.2"/>
 <path d="M1141.3,600.6L1150.1,609.1M1150.1,600.6L1141.3,609.1" stroke="#4a4a4a" stroke-width="1.2"/>
</g>
<g fill="none" stroke="#3f9b62" stroke-width="1.25" stroke-linecap="round" stroke-linejoin="round">
 <path d="M120.6,81.1L125.2,76.6M122.1,76.6H125.2V79.7"/>
 <path d="M317,81.1L321.8,76.7M318.7,76.7H321.8V79.8"/>
 <path d="M517.5,81.1L522.6,76.6M519.5,76.6H522.6V79.7"/>
 <path d="M721.8,81.1L727.5,76.6M724.4,76.6H727.5V79.7"/>
 <path d="M1124.8,81.1L1129.9,76.6M1126.8,76.6H1129.9V79.7"/>
</g>
</svg>

<div style="position:absolute;left:0;top:0;width:1200px;height:630px;will-change:opacity"><div class="tx" style="left:31.00px;top:22.00px;font-size:13.23px;line-height:13.23px;font-weight:normal;color:#303030;transform:scaleX(1.0227);-webkit-text-stroke:0.35px #303030">All divisions</div>
<div class="tx" style="left:142.00px;top:22.00px;font-size:13.23px;line-height:13.23px;font-weight:normal;color:#303030;transform:scaleX(1.0029);-webkit-text-stroke:0.35px #303030">All emails</div>
<div class="tx" style="left:240.00px;top:22.00px;font-size:13.23px;line-height:13.23px;font-weight:normal;color:#303030;transform:scaleX(1.0225);-webkit-text-stroke:0.35px #303030">Any send type</div>
<div class="tx" style="left:365.00px;top:22.00px;font-size:13.23px;line-height:13.23px;font-weight:normal;color:#303030;transform:scaleX(1.0332);-webkit-text-stroke:0.35px #303030">Metric: Event count</div>
<div class="tx" style="left:523.00px;top:22.00px;font-size:13.23px;line-height:13.23px;font-weight:normal;color:#303030;transform:scaleX(1.0355);-webkit-text-stroke:0.35px #303030">Total</div>
<div class="tx" style="left:599.00px;top:22.00px;font-size:13.23px;line-height:13.23px;font-weight:normal;color:#303030;transform:scaleX(1.0023);-webkit-text-stroke:0.35px #303030">All apps</div>
<div class="tx" style="left:687.00px;top:22.00px;font-size:13.23px;line-height:13.23px;font-weight:normal;color:#303030;transform:scaleX(1.0236);-webkit-text-stroke:0.35px #303030">Any billing provider</div>
<div class="tx" style="left:842.00px;top:22.00px;font-size:13.23px;line-height:13.23px;font-weight:normal;color:#303030;transform:scaleX(1.0221);-webkit-text-stroke:0.35px #303030">Last 30 days</div>
<div class="tx" style="left:949.00px;top:22.00px;font-size:13.23px;line-height:13.23px;font-weight:normal;color:#303030;transform:scaleX(0.9809);-webkit-text-stroke:0.35px #303030">Save</div>
<div class="tx" style="left:18.00px;top:73.00px;font-size:11.77px;line-height:11.77px;font-weight:normal;color:#4a4a4a;transform:scaleX(1.0527);-webkit-text-stroke:0.2px #4a4a4a">Sent</div>
<div class="tx" style="left:218.00px;top:73.00px;font-size:11.77px;line-height:11.77px;font-weight:normal;color:#4a4a4a;transform:scaleX(1.0597);-webkit-text-stroke:0.2px #4a4a4a">Delivered</div>
<div class="tx" style="left:418.00px;top:73.00px;font-size:11.77px;line-height:11.77px;font-weight:normal;color:#4a4a4a;transform:scaleX(1.0641);-webkit-text-stroke:0.2px #4a4a4a">Opened</div>
<div class="tx" style="left:618.00px;top:73.00px;font-size:11.77px;line-height:11.77px;font-weight:normal;color:#4a4a4a;transform:scaleX(1.0808);-webkit-text-stroke:0.2px #4a4a4a">Clicked</div>
<div class="tx" style="left:818.00px;top:73.00px;font-size:11.77px;line-height:11.77px;font-weight:normal;color:#4a4a4a;transform:scaleX(1.0777);-webkit-text-stroke:0.2px #4a4a4a">Bounced</div>
<div class="tx" style="left:1018.00px;top:73.00px;font-size:11.77px;line-height:11.77px;font-weight:normal;color:#4a4a4a;transform:scaleX(1.0846);-webkit-text-stroke:0.2px #4a4a4a">Unsubscribed</div>
<div class="tx" style="left:135.00px;top:73.00px;font-size:12.06px;line-height:12.06px;font-weight:normal;color:#303030;transform:scaleX(0.9709);-webkit-text-stroke:0.25px #303030">2803.1%</div>
<div class="tx" style="left:332.00px;top:73.00px;font-size:12.06px;line-height:12.06px;font-weight:normal;color:#303030;transform:scaleX(1.0399);-webkit-text-stroke:0.25px #303030">2822.2%</div>
<div class="tx" style="left:532.00px;top:73.00px;font-size:12.06px;line-height:12.06px;font-weight:normal;color:#303030;transform:scaleX(1.0482);-webkit-text-stroke:0.25px #303030">2548.8%</div>
<div class="tx" style="left:737.00px;top:73.00px;font-size:12.06px;line-height:12.06px;font-weight:normal;color:#303030;transform:scaleX(0.9797);-webkit-text-stroke:0.25px #303030">1150.0%</div>
<div class="tx" style="left:1139.00px;top:73.00px;font-size:12.06px;line-height:12.06px;font-weight:normal;color:#303030;transform:scaleX(1.0589);-webkit-text-stroke:0.25px #303030">500.0%</div>
<div class="tx" style="left:36.00px;top:95.00px;font-size:16.42px;line-height:16.42px;font-weight:normal;color:#1a1a1a;transform:scaleX(1.0336);-webkit-text-stroke:0.8px #1a1a1a">1,858</div>
<div class="tx" style="left:236.00px;top:95.00px;font-size:16.42px;line-height:16.42px;font-weight:normal;color:#1a1a1a;transform:scaleX(0.9942);-webkit-text-stroke:0.8px #1a1a1a">1,841</div>
<div class="tx" style="left:436.00px;top:95.00px;font-size:16.42px;line-height:16.42px;font-weight:normal;color:#1a1a1a;transform:scaleX(0.9551);-webkit-text-stroke:0.8px #1a1a1a">2,119</div>
<div class="tx" style="left:637.00px;top:95.00px;font-size:16.42px;line-height:16.42px;font-weight:normal;color:#1a1a1a;transform:scaleX(1.0961);-webkit-text-stroke:0.8px #1a1a1a">50</div>
<div class="tx" style="left:836.00px;top:95.00px;font-size:16.42px;line-height:16.42px;font-weight:normal;color:#1a1a1a;transform:scaleX(0.8926);-webkit-text-stroke:0.8px #1a1a1a">11</div>
<div class="tx" style="left:1036.00px;top:95.00px;font-size:16.42px;line-height:16.42px;font-weight:normal;color:#1a1a1a;transform:scaleX(0.9497);-webkit-text-stroke:0.8px #1a1a1a">12</div>
<div class="tx" style="left:19.00px;top:152.00px;font-size:12.21px;line-height:12.21px;font-weight:normal;color:#303030;transform:scaleX(1.0782);-webkit-text-stroke:0.3px #303030">Total emails sent</div>
<div class="tx" style="left:18.00px;top:169.00px;font-size:12.50px;line-height:12.50px;font-weight:bold;color:#1a1a1a;transform:scaleX(1.1348);-webkit-text-stroke:0.3px #1a1a1a">1,858</div>
<div class="tx" style="left:371.00px;top:438.00px;font-size:12.36px;line-height:12.36px;font-weight:normal;color:#4a4a4a;transform:scaleX(0.9768);-webkit-text-stroke:0.15px #4a4a4a">Sent</div>
<div class="tx" style="left:433.00px;top:438.00px;font-size:12.36px;line-height:12.36px;font-weight:normal;color:#4a4a4a;transform:scaleX(0.9975);-webkit-text-stroke:0.15px #4a4a4a">Delivered</div>
<div class="tx" style="left:522.00px;top:438.00px;font-size:12.36px;line-height:12.36px;font-weight:normal;color:#4a4a4a;transform:scaleX(0.9913);-webkit-text-stroke:0.15px #4a4a4a">Opened</div>
<div class="tx" style="left:601.00px;top:438.00px;font-size:12.36px;line-height:12.36px;font-weight:normal;color:#4a4a4a;transform:scaleX(1.0219);-webkit-text-stroke:0.15px #4a4a4a">Clicked</div>
<div class="tx" style="left:678.00px;top:438.00px;font-size:12.36px;line-height:12.36px;font-weight:normal;color:#4a4a4a;transform:scaleX(1.0211);-webkit-text-stroke:0.15px #4a4a4a">Bounced</div>
<div class="tx" style="left:764.00px;top:438.00px;font-size:12.36px;line-height:12.36px;font-weight:normal;color:#4a4a4a;transform:scaleX(1.0308);-webkit-text-stroke:0.15px #4a4a4a">Unsubscribed</div>
<div class="tx" style="left:40.00px;top:518.00px;font-size:12.64px;line-height:12.64px;font-weight:normal;color:#9b9b9b;transform:scaleX(1.0580);-webkit-text-stroke:0.15px #9b9b9b">Filter deliveries by email or name...</div>
<div class="tx" style="left:18.00px;top:557.00px;font-size:11.48px;line-height:11.48px;font-weight:bold;color:#303030;transform:scaleX(1.0159);-webkit-text-stroke:0.1px #303030">Email</div>
<div class="tx" style="left:533.00px;top:557.00px;font-size:11.48px;line-height:11.48px;font-weight:bold;color:#303030;transform:scaleX(1.0151);-webkit-text-stroke:0.1px #303030">Recipient</div>
<div class="tx" style="left:895.00px;top:557.00px;font-size:11.48px;line-height:11.48px;font-weight:bold;color:#303030;transform:scaleX(1.0293);-webkit-text-stroke:0.1px #303030">Status</div>
<div class="tx" style="left:1012.00px;top:557.00px;font-size:11.48px;line-height:11.48px;font-weight:bold;color:#303030;transform:scaleX(1.0452);-webkit-text-stroke:0.1px #303030">Opened</div>
<div class="tx" style="left:1125.00px;top:557.00px;font-size:11.48px;line-height:11.48px;font-weight:bold;color:#303030;transform:scaleX(1.0391);-webkit-text-stroke:0.1px #303030">Clicked</div>
<div class="tx" style="left:65.00px;top:590.00px;font-size:12.50px;line-height:12.50px;font-weight:normal;color:#303030;transform:scaleX(1.0574);-webkit-text-stroke:0.3px #303030">Seismic vol. 3 Prep Invite</div>
<div class="tx" style="left:65.00px;top:608.00px;font-size:12.50px;line-height:12.50px;font-weight:normal;color:#616161;transform:scaleX(1.0418);-webkit-text-stroke:0.3px #616161">Dec 10 at 8:35 PM</div>
<div class="tx" style="left:534.00px;top:597.00px;font-size:13.52px;line-height:13.52px;font-weight:normal;color:#4a4a4a;transform:scaleX(0.9743);-webkit-text-stroke:0.3px #4a4a4a">jordan@heymantle.com</div>
<div class="tx" style="left:884.00px;top:599.00px;font-size:12.79px;line-height:12.79px;font-weight:normal;color:#2b6638;transform:scaleX(1.0547);-webkit-text-stroke:0.3px #2b6638">Delivered</div></div>
</body></html>
